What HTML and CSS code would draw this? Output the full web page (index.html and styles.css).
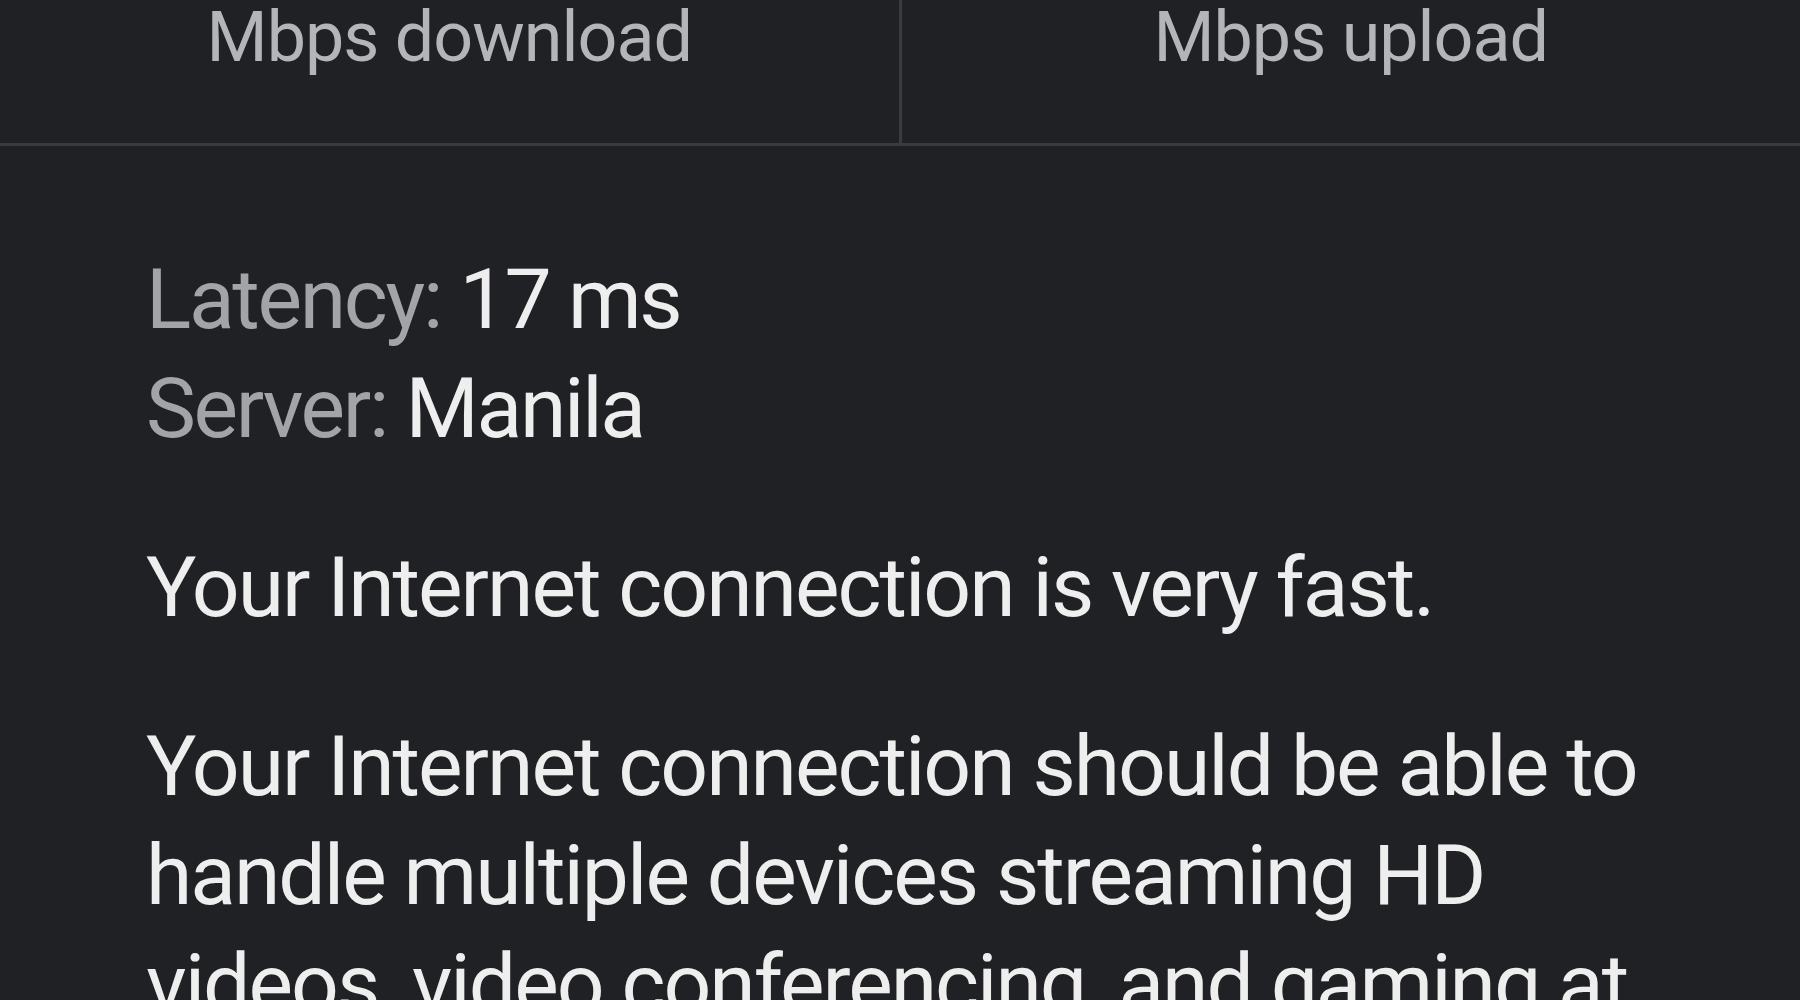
FILE: index.html
```html
<!DOCTYPE html>
<html lang="en">
<head>
<meta charset="utf-8">
<title>Speed test result</title>
<link rel="stylesheet" href="styles.css">
</head>
<body>
<div class="page">
  <div class="stats">
    <div class="stat"><span class="unit">Mbps download</span></div>
    <div class="stat"><span class="unit">Mbps upload</span></div>
  </div>
  <div class="details">
    <div class="meta">
      <div class="meta-row"><span class="label">Latency:</span> <span class="value">17 ms</span></div>
      <div class="meta-row"><span class="label">Server:</span> <span class="value">Manila</span></div>
    </div>
    <p class="summary">Your Internet connection is very fast.</p>
    <p class="summary">Your Internet connection should be able to handle multiple devices streaming HD videos, video conferencing, and gaming at the same time.</p>
  </div>
</div>
</body>
</html>
```
FILE: styles.css
```css
html, body {
  margin: 0;
  padding: 0;
  background: #202124;
  overflow: hidden;
}
.page {
  width: 1800px;
  height: 1000px;
  overflow: hidden;
  font-family: Roboto, "Noto Sans", sans-serif;
  color: #e8eaed;
}
.stats {
  display: flex;
  height: 143px;
  border-bottom: 3px solid #3a3b3f;
}
.stat {
  flex: 1;
  display: flex;
  justify-content: center;
  align-items: flex-start;
}
.stat + .stat {
  border-left: 3px solid #3a3b3f;
}
.unit {
  font-size: 70px;
  line-height: 82px;
  letter-spacing: -1px;
  color: #b4b5b8;
  margin-top: -4px;
}
.details {
  padding: 0 100px 0 146px;
}
.meta {
  padding-top: 99px;
}
.meta-row {
  font-size: 84px;
  line-height: 109px;
  letter-spacing: -2.3px;
}
.label {
  color: #a3a4a7;
}
.value {
  color: #eeeeef;
}
.summary {
  margin: 70px 0 0;
  font-size: 84px;
  line-height: 109px;
  letter-spacing: -2px;
  color: #eeeeef;
}
```
